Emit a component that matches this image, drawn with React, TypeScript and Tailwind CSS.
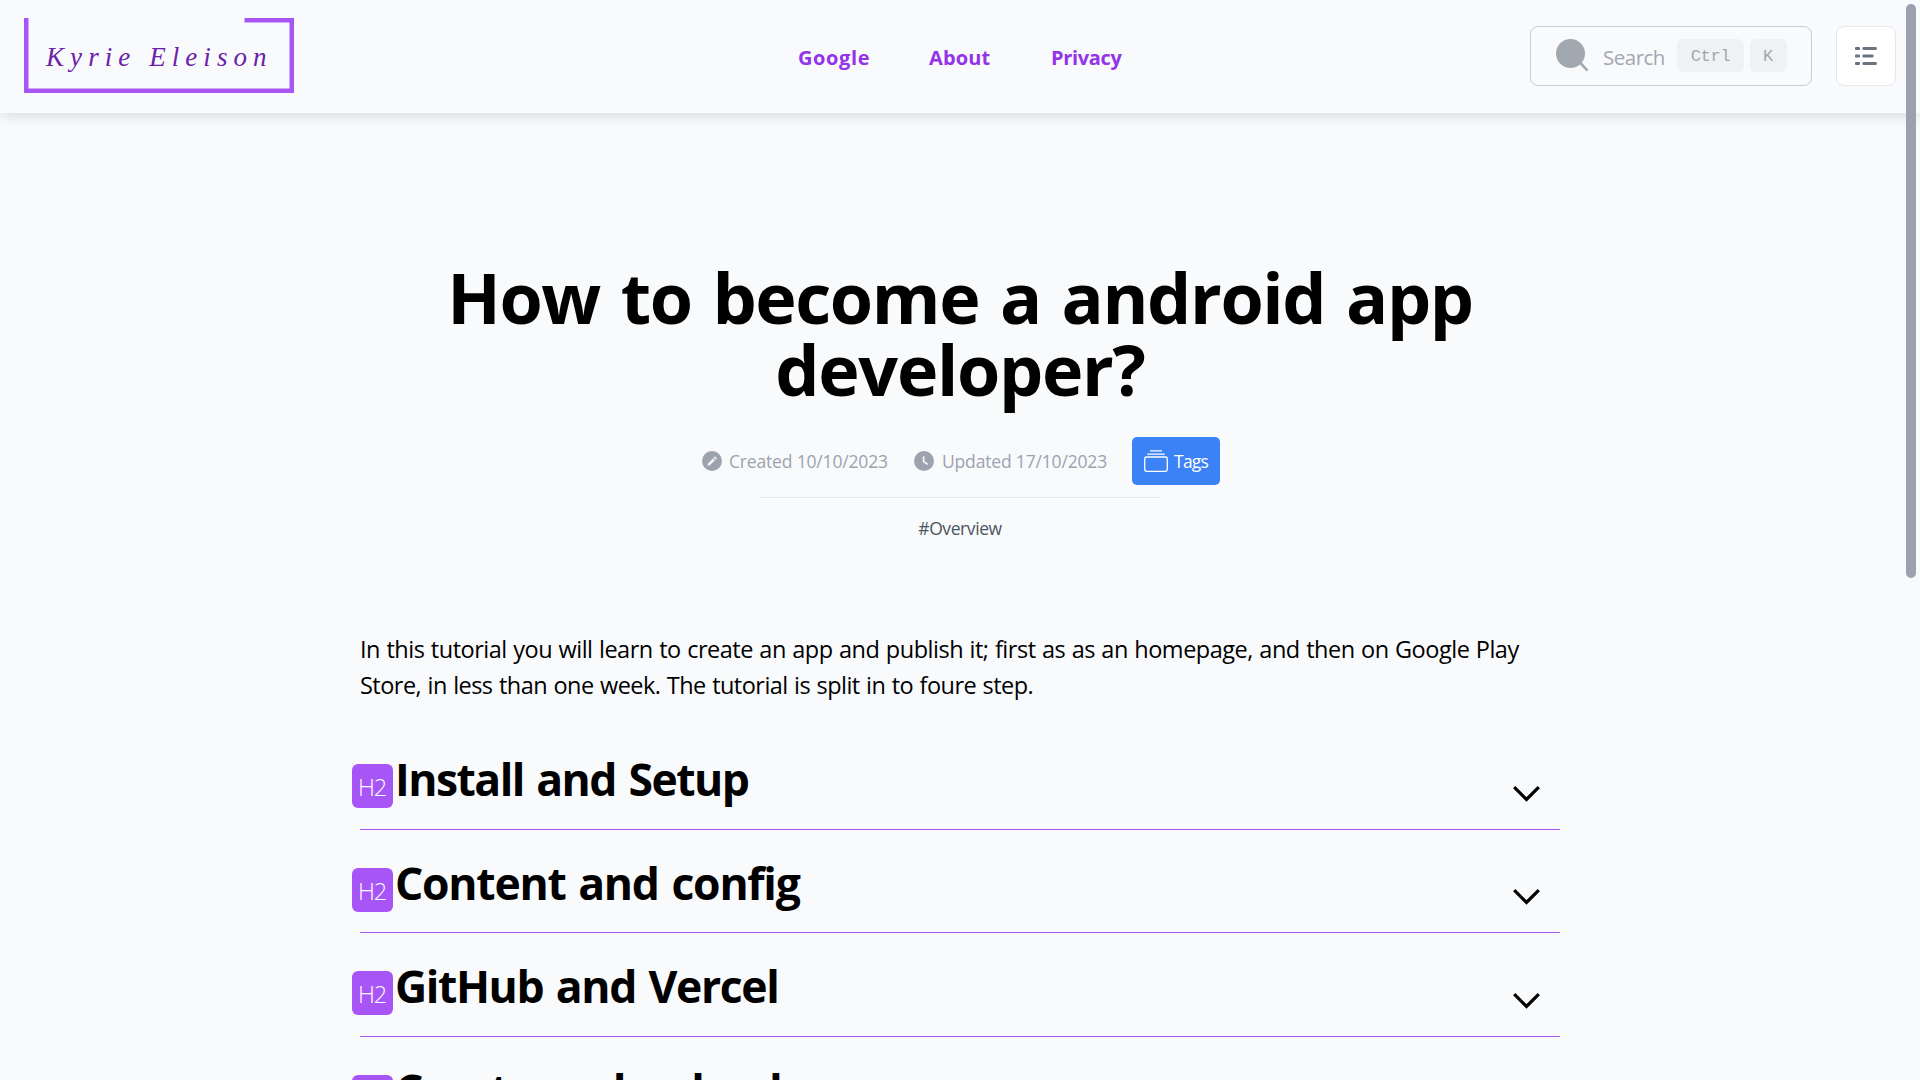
import React from "react";

const navLinks = [
  { label: "Google", className: "w-[131px] tracking-[0.6px]" },
  { label: "About", className: "w-[122px] tracking-[0.15px]" },
  { label: "Privacy", className: "w-[74px] tracking-[-0.35px]" },
];

const sections = [
  { title: "Install and Setup", className: "tracking-[-1.53px]" },
  { title: "Content and config", className: "tracking-[-1.27px]" },
  { title: "GitHub and Vercel", className: "tracking-[-1.4px]" },
  { title: "Create and upload", className: "tracking-[-1.6px]" },
];

function Logo() {
  return (
    <a className="relative ml-6 mt-[18px] block h-[75px] w-[270px] shrink-0">
      <svg className="absolute inset-0" width="270" height="75" viewBox="0 0 270 75" fill="#a855f7">
        <path d="M0 0H4.5V70.5H265.5V4.5H220.5V0H270V75H0Z" />
      </svg>
      <span className="block whitespace-nowrap pl-[22px] pt-[19px] font-['Liberation_Serif',serif] text-[27px] italic leading-[40px] tracking-[6.07px] text-[#6b21a8]">
        Kyrie Eleison
      </span>
    </a>
  );
}

function SearchBox() {
  return (
    <div className="mt-[26px] flex h-[60px] w-[282px] shrink-0 items-start rounded-lg border border-[#c9ccd2] text-[#a1a7b0]">
      <svg className="ml-[25px] mt-3 shrink-0" width="33" height="33" viewBox="0 0 33 33">
        <circle cx="14.5" cy="14.5" r="14.5" fill="#a1a8b0" />
        <path d="M23.5 23L30.8 30.8" stroke="#a1a8b0" strokeWidth="2.6" strokeLinecap="round" />
      </svg>
      <span className="ml-[14px] mt-[10px] w-[74px] whitespace-nowrap text-[20.5px] leading-[40px] tracking-[-0.5px]">Search</span>
      <kbd className="mt-3 h-[33px] w-[67px] rounded-md bg-[#f0f1f3] text-center font-['Liberation_Mono',monospace] text-[17px] leading-[35px] tracking-[-0.3px]">Ctrl</kbd>
      <kbd className="ml-1.5 mt-3 h-[33px] w-[37px] rounded-md bg-[#f0f1f3] pr-px text-center font-['Liberation_Mono',monospace] text-[17px] leading-[35px]">K</kbd>
    </div>
  );
}

function MenuButton() {
  return (
    <button className="ml-6 mt-[26px] flex h-[60px] w-[60px] shrink-0 items-center justify-center rounded-lg border border-[#e5e7eb] bg-white">
      <svg width="22" height="18" viewBox="0 0 22 18" fill="#6b7280">
        <rect x="0" y="0" width="5" height="3" rx="1" />
        <rect x="7.5" y="0" width="14.3" height="3" rx="1" />
        <rect x="0" y="7.5" width="5" height="3" rx="1" />
        <rect x="7.5" y="7.5" width="11" height="3" rx="1" />
        <rect x="0" y="15" width="5" height="3" rx="1" />
        <rect x="7.5" y="15" width="14.3" height="3" rx="1" />
      </svg>
    </button>
  );
}

function Header() {
  return (
    <header className="relative z-10 flex h-[113px] w-full items-start bg-[#f9fafc] shadow-[0_4px_12px_-1px_rgba(0,0,0,0.13)]">
      <Logo />
      <nav className="ml-[504px] mt-[38px] flex w-[732px] text-[20px] font-bold leading-[40px] text-[#9333ea]">
        {navLinks.map((l) => (
          <a key={l.label} className={l.className}>{l.label}</a>
        ))}
      </nav>
      <SearchBox />
      <MenuButton />
    </header>
  );
}

function Meta() {
  return (
    <div className="ml-[702px] mt-8 flex h-12 items-center whitespace-nowrap text-[17.5px] leading-6 text-[#9ca3af]">
      <div className="flex w-[212px] items-center">
        <svg width="20" height="20" viewBox="0 0 20 20" className="shrink-0">
          <circle cx="10" cy="10" r="10" fill="#9ca3af" />
          <path d="M5.8 14.6L6.5 12.2L11 7.7L12.6 9.2L8 13.8Z" fill="#f9fafc" stroke="#f9fafc" strokeWidth=".5" />
          <path d="M11.9 6.8L13 5.7L14.5 7.2L13.4 8.3Z" fill="#f9fafc" stroke="#f9fafc" strokeWidth=".5" />
        </svg>
        <span className="ml-[7px] tracking-[-0.17px]">Created 10/10/2023</span>
      </div>
      <div className="flex w-[218px] items-center">
        <svg width="20" height="20" viewBox="0 0 20 20" className="shrink-0">
          <circle cx="10" cy="10" r="10" fill="#9ca3af" />
          <path d="M9.6 5.2V10.6L13.8 13.3" fill="none" stroke="#f9fafc" strokeWidth="1.6" />
        </svg>
        <span className="ml-2 tracking-[-0.17px]">Updated 17/10/2023</span>
      </div>
      <button className="flex h-12 w-[88px] items-center rounded-[5px] bg-[#3b82f6] pl-3 text-white">
        <svg width="24" height="22" viewBox="0 0 24 22" fill="none" stroke="currentColor" strokeWidth="1.3" className="shrink-0">
          <path d="M6 .9H18M3.2 4.1H20.8" />
          <rect x=".7" y="7" width="22.6" height="14.3" rx="1.8" />
        </svg>
        <span className="ml-[6px] tracking-[-0.75px]">Tags</span>
      </button>
    </div>
  );
}

function Section({ title, className }: { title: string; className: string }) {
  return (
    <section className="flex h-[103.6px] items-start border-b border-[#a855f7]">
      <span className="-ml-2 mt-[38px] h-11 w-[41px] shrink-0 rounded-md bg-[#a855f7] pl-[6px] text-[23.5px] font-light leading-[46px] tracking-[-1.2px] text-white">
        H2
      </span>
      <h2 className={`ml-[2px] mt-[23px] flex-1 whitespace-nowrap text-[44.5px] font-bold leading-[60px] text-black [word-spacing:2.5px] ${className}`}>{title}</h2>
      <svg className="mr-[20.5px] mt-[59.5px] shrink-0" width="27" height="16" viewBox="0 0 27 16" fill="none" stroke="#000" strokeWidth="3.2">
        <path d="M1.2 1.2L13.5 13.5L25.8 1.2" />
      </svg>
    </section>
  );
}

export default function App() {
  return (
    <div className="relative h-[1080px] w-[1920px] overflow-hidden bg-[#f9fafc] font-['Open_Sans',sans-serif]">
      <Header />
      <main className="flex flex-col">
        <h1 className="mt-[148px] whitespace-nowrap text-center text-[70px] font-bold leading-[72px] text-black [word-spacing:4px]">
          <span className="block tracking-[-1.39px]">How to become a android app</span>
          <span className="block tracking-[-1.3px]">developer?</span>
        </h1>
        <Meta />
        <div className="mt-3 h-px w-[400px] self-center bg-[#e5e7eb]" />
        <p className="mt-[18px] text-center text-[17.5px] leading-6 tracking-[-0.42px] text-[#4b5563]">#Overview</p>
        <article className="mx-auto mt-[91px] w-[1200px]">
          <p className="whitespace-nowrap text-[23.5px] leading-9 text-black [word-spacing:0.8px]">
            <span className="block tracking-[-0.485px]">
              In this tutorial you will learn to create an app and publish it; first as as an homepage, and then on Google Play
            </span>
            <span className="block tracking-[-0.53px]">Store, in less than one week. The tutorial is split in to foure step.</span>
          </p>
          <div className="mt-[23px]">
            {sections.map((s) => (
              <Section key={s.title} {...s} />
            ))}
          </div>
        </article>
      </main>
      <div className="absolute left-[1906px] top-1 z-20 h-[574px] w-[10px] rounded-full bg-[#9ca1af]" />
    </div>
  );
}
